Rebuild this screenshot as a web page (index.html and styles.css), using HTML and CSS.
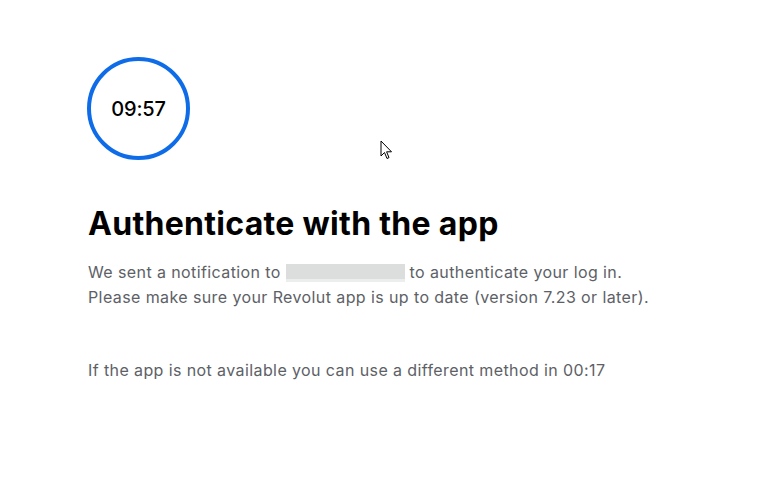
FILE: index.html
```html
<!DOCTYPE html>
<html lang="en">
<head>
  <meta charset="UTF-8">
  <meta name="viewport" content="width=device-width, initial-scale=1.0">
  <title>Authenticate with the app</title>
  <link rel="stylesheet" href="styles.css">
</head>
<body>
  <main class="auth">
    <div class="timer">
      <span class="timer-value">09:57</span>
    </div>
    <h1 class="auth-title">Authenticate with the app</h1>
    <p class="auth-text">
      We sent a notification to <span class="redacted"></span> to authenticate your log in.<br>
      Please make sure your Revolut app is up to date (version 7.23 or later).
    </p>
    <p class="auth-text auth-fallback">If the app is not available you can use a different method in 00:17</p>
  </main>
  <svg class="cursor" width="13" height="21" viewBox="0 0 13 21">
    <path d="M1 1 L1 16 L4.5 12.5 L7 18.5 L9 17.6 L6.6 11.8 L11.5 11.8 Z" fill="#fff" stroke="#000" stroke-width="1" stroke-linejoin="miter"/>
  </svg>
</body>
</html>
```

FILE: styles.css
```css
body {
  margin: 0;
  font-family: Inter, "Noto Sans", Arial, sans-serif;
  background: #fff;
  color: #000;
}
.auth {
  padding: 57px 0 0 88px;
}
.timer {
  width: 95px;
  height: 95px;
  border: 4px solid #0f6ce8;
  border-radius: 50%;
  display: flex;
  align-items: center;
  justify-content: center;
  margin-left: -1px;
}
.timer-value {
  font-size: 20px;
  font-weight: 500;
  letter-spacing: -0.2px;
}
.auth-title {
  margin: 42px 0 0;
  font-size: 32px;
  font-weight: 700;
  letter-spacing: 0.3px;
  line-height: 44px;
}
.auth-text {
  margin: 14px 0 0;
  font-size: 16px;
  line-height: 25px;
  color: #5d6166;
  letter-spacing: 0.4px;
}
.auth-fallback {
  margin-top: 48px;
}
.redacted {
  display: inline-block;
  width: 119px;
  height: 18px;
  vertical-align: -4px;
  background: linear-gradient(to bottom, #dcdddd 0, #dcdddd 15px, #eceded 15px);
}
.cursor {
  position: absolute;
  left: 380px;
  top: 140px;
}
```
